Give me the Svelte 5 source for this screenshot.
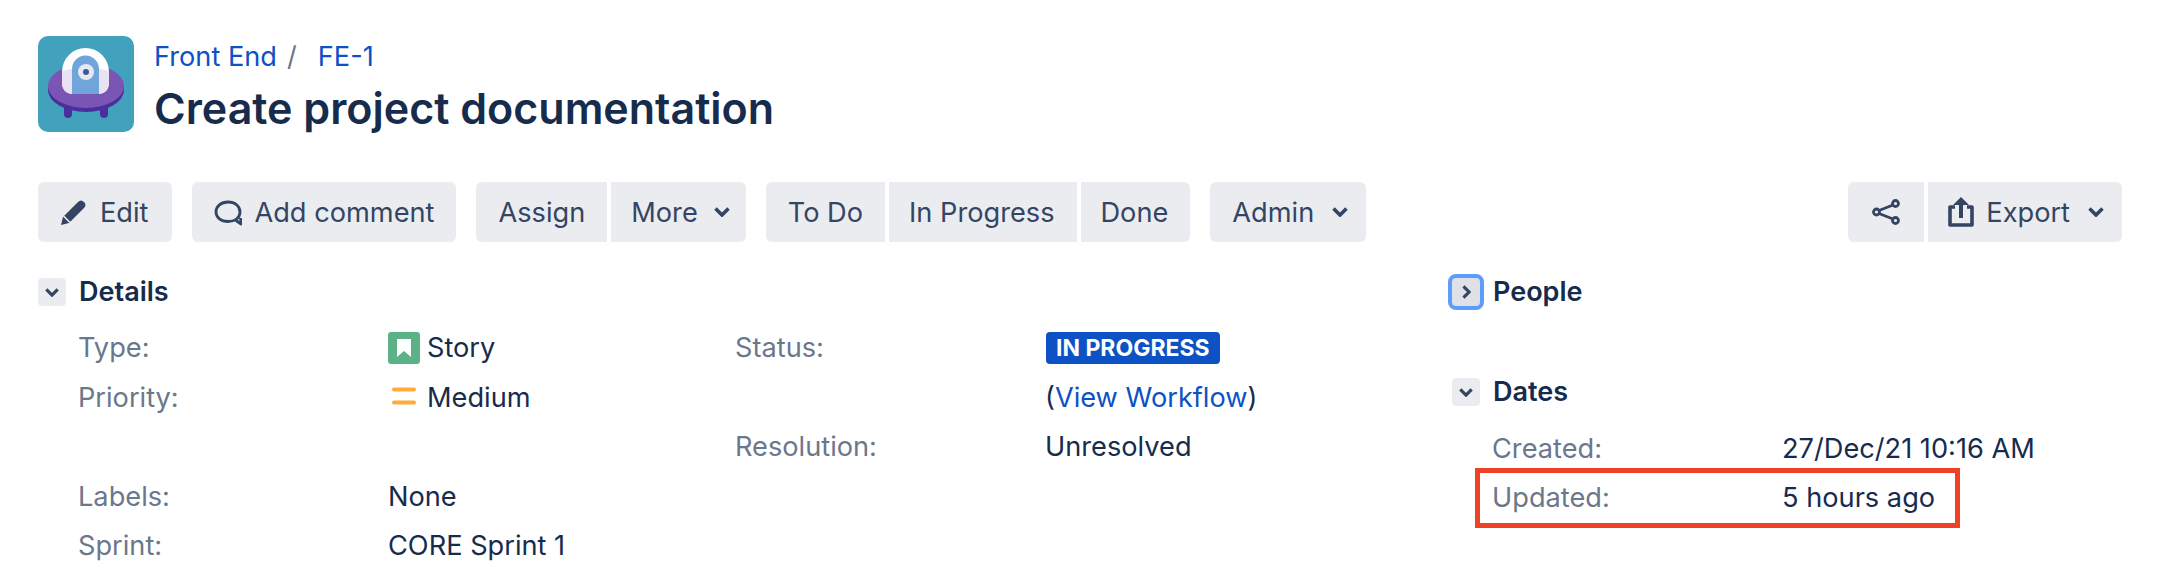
<script>
  const leftRows = [
    { label: "Type:", value: "Story", icon: "story" },
    { label: "Priority:", value: "Medium", icon: "medium" },
    { label: "", value: "" },
    { label: "Labels:", value: "None" },
    { label: "Sprint:", value: "CORE Sprint 1" },
  ];
</script>

<div class="page">
  <header class="head">
    <svg class="avatar" viewBox="0 0 96 96" width="96" height="96">
      <rect width="96" height="96" rx="10" fill="#42a2bd" />
      <rect x="26" y="62" width="8" height="20" rx="4" fill="#4a2f9c" />
      <rect x="62" y="62" width="8" height="20" rx="4" fill="#4a2f9c" />
      <ellipse cx="48" cy="54" rx="38" ry="22" fill="#4a2f9c" />
      <ellipse cx="48" cy="50" rx="38" ry="22" fill="#7b55b5" />
      <path d="M24 36a23.500 24 0 0 1 47 0v10q0 12-12 12H36q-12 0-12-12z" fill="#fff" />
      <path d="M24 35q24-7 47 0v11q0 12-12 12H36q-12 0-12-12z" fill="#e9e2f3" />
      <path d="M34 33a13.500 13.500 0 0 1 27 0v25H34z" fill="#6fa5da" />
      <circle cx="48" cy="36" r="8" fill="#e9e6f4" />
      <circle cx="48" cy="36" r="3" fill="#3d5a96" />
    </svg>
    <div class="titles">
      <div class="crumbs"><a href="#top">Front End</a><span class="sep">/</span><a href="#top">FE-1</a></div>
      <h1>Create project documentation</h1>
    </div>
  </header>

  <div class="toolbar">
    <div class="group">
      <button class="btn icon-btn edit">
        <svg viewBox="0 0 28 28" width="28" height="28"><path d="M1 27l2-8L18 4q3-3 6 0l0 0q3 3 0 6L9 25z" fill="#344563" /><path d="M3.500 18l6.500 6.500" stroke="#ebecf0" stroke-width="1.600" /></svg>
        Edit
      </button>
    </div>
    <div class="group">
      <button class="btn icon-btn">
        <svg viewBox="0 0 28 28" width="28" height="28"><path d="M22 22.500l5 3.500-.5-6M14 23.500C7 23.500 2 19.500 2 14S7 4 14 4s12 4 12 10-5 9.500-12 9.500z" fill="none" stroke="#344563" stroke-width="2.800" stroke-linejoin="round" /></svg>
        Add comment
      </button>
    </div>
    <div class="group">
      <button class="btn">Assign</button>
      <button class="btn menu more">More <svg class="chev" viewBox="0 0 16 10" width="16" height="10"><path d="M1.500 1.500L8 8l6.500-6.500" fill="none" stroke="#344563" stroke-width="3.600" /></svg></button>
    </div>
    <div class="group">
      <button class="btn">To Do</button>
      <button class="btn">In Progress</button>
      <button class="btn">Done</button>
    </div>
    <div class="group">
      <button class="btn menu">Admin <svg class="chev" viewBox="0 0 16 10" width="16" height="10"><path d="M1.500 1.500L8 8l6.500-6.500" fill="none" stroke="#344563" stroke-width="3.600" /></svg></button>
    </div>
    <div class="group end">
      <button class="btn share" aria-label="Share">
        <svg viewBox="0 0 28 28" width="28" height="28" fill="none" stroke="#344563" stroke-width="2.800"><circle cx="23.500" cy="5.500" r="3" /><circle cx="23.500" cy="22.500" r="3" /><circle cx="4.500" cy="14" r="3" /><path d="M7 12.500L21 7M7 15.500L21 21" /></svg>
      </button>
      <button class="btn menu icon-btn export">
        <svg viewBox="0 0 26 32" width="26" height="32"><path d="M7 11H2v18h22V11h-5" fill="none" stroke="#344563" stroke-width="3.600" stroke-linejoin="round" /><path d="M13 1l8 8h-6v13h-4V9H5z" fill="#344563" /></svg>
        Export <svg class="chev" viewBox="0 0 16 10" width="16" height="10"><path d="M1.500 1.500L8 8l6.500-6.500" fill="none" stroke="#344563" stroke-width="3.600" /></svg>
      </button>
    </div>
  </div>

  <main class="layout">
    <section class="details">
      <h2><span class="toggle"><svg viewBox="0 0 16 10" width="14" height="9"><path d="M1.500 1.500L8 8l6.500-6.500" fill="none" stroke="#344563" stroke-width="3.600" /></svg></span>Details</h2>
      <div class="columns">
        <dl class="rows">
          {#each leftRows as row}
            <dt>{row.label}</dt>
            <dd>
              {#if row.icon === "story"}
                <svg class="ico" viewBox="0 0 32 32" width="32" height="32"><rect width="32" height="32" rx="3" fill="#5bb286" /><path d="M9 7h14v18l-7-6-7 6z" fill="#fff" /></svg>
              {:else if row.icon === "medium"}
                <svg class="ico" viewBox="0 0 32 32" width="32" height="32"><rect x="4" y="6.500" width="24" height="4" rx="2" fill="#ffab3a" /><rect x="4" y="19.500" width="24" height="4" rx="2" fill="#ffab3a" /></svg>
              {/if}
              <span>{row.value}</span>
            </dd>
          {/each}
        </dl>
        <dl class="rows">
          <dt>Status:</dt>
          <dd><span class="lozenge">IN PROGRESS</span></dd>
          <dt></dt>
          <dd><span>(<a href="#top">View Workflow</a>)</span></dd>
          <dt>Resolution:</dt>
          <dd><span>Unresolved</span></dd>
        </dl>
      </div>
    </section>

    <aside class="side">
      <h2 class="people"><span class="toggle focus"><svg viewBox="0 0 10 16" width="9" height="14"><path d="M1.500 1.500L8 8l-6.500 6.500" fill="none" stroke="#344563" stroke-width="3.600" /></svg></span>People</h2>
      <h2 class="dates"><span class="toggle"><svg viewBox="0 0 16 10" width="14" height="9"><path d="M1.500 1.500L8 8l6.500-6.500" fill="none" stroke="#344563" stroke-width="3.600" /></svg></span>Dates</h2>
      <dl class="rows dates-rows">
        <dt>Created:</dt>
        <dd><span>27/Dec/21 10:16 AM</span></dd>
      </dl>
      <dl class="rows highlight">
        <dt>Updated:</dt>
        <dd><span>5 hours ago</span></dd>
      </dl>
    </aside>
  </main>
</div>

<style>
  :global(body) {
    margin: 0;
    background: #fff;
  }

  .page {
    width: 2160px;
    height: 588px;
    box-sizing: border-box;
    padding: 36px 38px 0;
    font-family: Inter, "Liberation Sans", sans-serif;
    font-size: 27.200px;
    color: #172b4d;
  }

  a {
    color: #0c52c4;
    text-decoration: none;
  }

  .head {
    display: flex;
    gap: 20px;
  }

  .avatar {
    display: block;
    flex: none;
  }

  .crumbs {
    margin-top: 3px;
    line-height: 36px;
    display: flex;
  }

  .sep {
    color: #6b778c;
    margin: 0 21px 0 10px;
  }

  h1 {
    margin: 7px 0 0;
    font-size: 43px;
    line-height: 52px;
    font-weight: 600;
  }

  .toolbar {
    display: flex;
    gap: 20px;
    margin-top: 48px;
  }

  .group {
    display: flex;
    gap: 4px;
  }

  .end {
    margin-left: auto;
  }

  .btn {
    display: flex;
    align-items: center;
    gap: 10px;
    height: 60px;
    padding: 0 22px;
    border: none;
    border-radius: 0;
    background: #ebecf0;
    color: #344563;
    font: inherit;
  }

  .btn:not(:first-child) {
    padding-left: 20px;
  }

  .btn.menu {
    padding-right: 18px;
  }

  .btn.edit {
    padding-right: 24px;
  }

  .btn.more {
    padding-right: 16px;
  }

  .btn.more .chev {
    margin-left: 6px;
  }

  .icon-btn svg:first-child {
    margin-right: 2px;
  }

  .btn.export {
    padding-right: 18px;
  }

  .btn.share {
    padding: 0 24px;
  }

  .group .btn:first-child {
    border-radius: 6px 0 0 6px;
  }

  .group .btn:last-child {
    border-radius: 0 6px 6px 0;
  }

  .group .btn:only-child {
    border-radius: 6px;
  }

  .chev {
    margin-left: 8px;
  }

  .layout {
    display: flex;
    margin-top: 36px;
  }

  .details {
    flex: none;
    width: 1411px;
  }

  h2 {
    display: flex;
    align-items: center;
    margin: 0;
    font-size: 27px;
    line-height: 28px;
    font-weight: 600;
    gap: 13px;
  }

  .toggle {
    display: flex;
    align-items: center;
    justify-content: center;
    width: 28px;
    height: 28px;
    border-radius: 4px;
    background: #ebecf0;
  }

  .toggle.focus {
    width: 36px;
    height: 36px;
    margin: -4px -4px -4px -4px;
    box-sizing: border-box;
    border: 4px solid #5c9dfa;
    border-radius: 8px;
    background: #dfe1e6;
  }

  .columns {
    display: grid;
    grid-template-columns: 657px 1fr;
    padding: 17px 0 0 40px;
  }

  .rows {
    display: grid;
    grid-template-columns: 310px 1fr;
    grid-auto-rows: 49.500px;
    align-items: center;
    margin: 0;
  }

  dt {
    color: #6b778c;
  }

  dd {
    display: flex;
    align-items: center;
    gap: 7px;
    margin: 0;
  }

  .ico {
    flex: none;
  }

  .lozenge {
    display: inline-block;
    height: 32px;
    margin-left: 1px;
    padding: 0 10px;
    border-radius: 4px;
    background: #0c52c4;
    color: #fff;
    font-size: 23px;
    font-weight: 700;
    line-height: 32px;
  }

  .side {
    flex: none;
    width: 673px;
  }

  .people {
    margin-left: 3px;
  }

  .dates {
    margin-top: 72px;
    margin-left: 3px;
  }

  .dates-rows {
    grid-template-columns: 290px 1fr;
    margin: 18px 0 0 43px;
  }

  .highlight {
    width: 485px;
    box-sizing: border-box;
    grid-template-columns: 290px 1fr;
    margin: -6px 0 0 26px;
    padding-left: 12px;
    border: 5px solid #ee4125;
    grid-auto-rows: 50px;
  }
</style>
